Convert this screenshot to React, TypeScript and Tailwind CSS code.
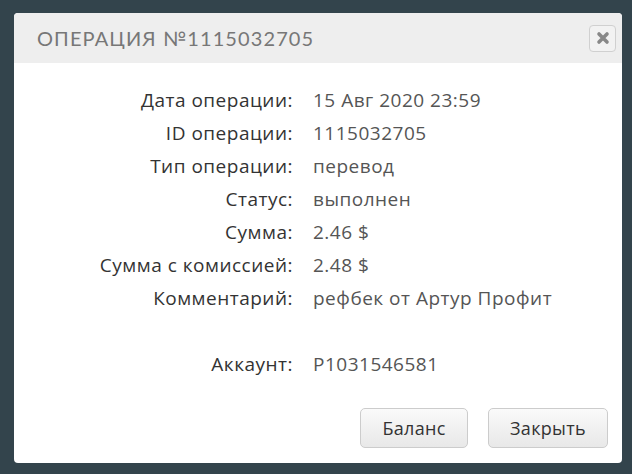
import React from "react";

const rows: [string, string][] = [
  ["Дата операции:", "15 Авг 2020 23:59"],
  ["ID операции:", "1115032705"],
  ["Тип операции:", "перевод"],
  ["Статус:", "выполнен"],
  ["Сумма:", "2.46 $"],
  ["Сумма с комиссией:", "2.48 $"],
  ["Комментарий:", "рефбек от Артур Профит"],
  ["", ""],
  ["Аккаунт:", "P1031546581"],
];

export default function App() {
  return (
    <div className="w-[632px] h-[474px] bg-[#33444c] pt-[13px] pl-[14px] overflow-hidden" style={{ fontFamily: "'Open Sans', 'Liberation Sans', sans-serif" }}>
      <div className="w-[608px] h-[450px] bg-white rounded-[4px] flex flex-col overflow-hidden">
        <div className="h-[50px] bg-[#eeeeee] flex items-center justify-between pl-[23px] pr-[6px]">
          <div className="text-[20px] tracking-[1.1px] text-[#777777]" style={{ fontFamily: "Lato, 'Liberation Sans', sans-serif" }}>
            ОПЕРАЦИЯ №1115032705
          </div>
          <div className="w-[27px] h-[27px] border border-[#d0d0d0] rounded-[4px] bg-[#f2f2f2] flex items-center justify-center">
            <svg width="14" height="14" viewBox="0 0 14 14">
              <path d="M3 3 L11 11 M11 3 L3 11" stroke="#888888" strokeWidth="3.6" strokeLinecap="round" />
            </svg>
          </div>
        </div>
        <div className="flex-1 pt-[21px]">
          {rows.map(([l, v], i) => (
            <div key={i} className="flex h-[33px] items-center text-[19px] tracking-[0.5px]">
              <div className="w-[279px] text-right text-[#333333]">{l}</div>
              <div className="pl-[20px] text-[#555555]">{v}</div>
            </div>
          ))}
        </div>
        <div className="flex justify-end gap-[20px] pr-[14px] pb-[15px]">
          <button className="w-[108px] h-[40px] rounded-[5px] border border-[#cccccc] bg-gradient-to-b from-[#fafafa] to-[#e8e8e8] text-[18px] tracking-[0.3px] text-[#333333]">
            Баланс
          </button>
          <button className="w-[120px] h-[40px] rounded-[5px] border border-[#cccccc] bg-gradient-to-b from-[#fafafa] to-[#e8e8e8] text-[18px] tracking-[0.3px] text-[#333333]">
            Закрыть
          </button>
        </div>
      </div>
    </div>
  );
}
